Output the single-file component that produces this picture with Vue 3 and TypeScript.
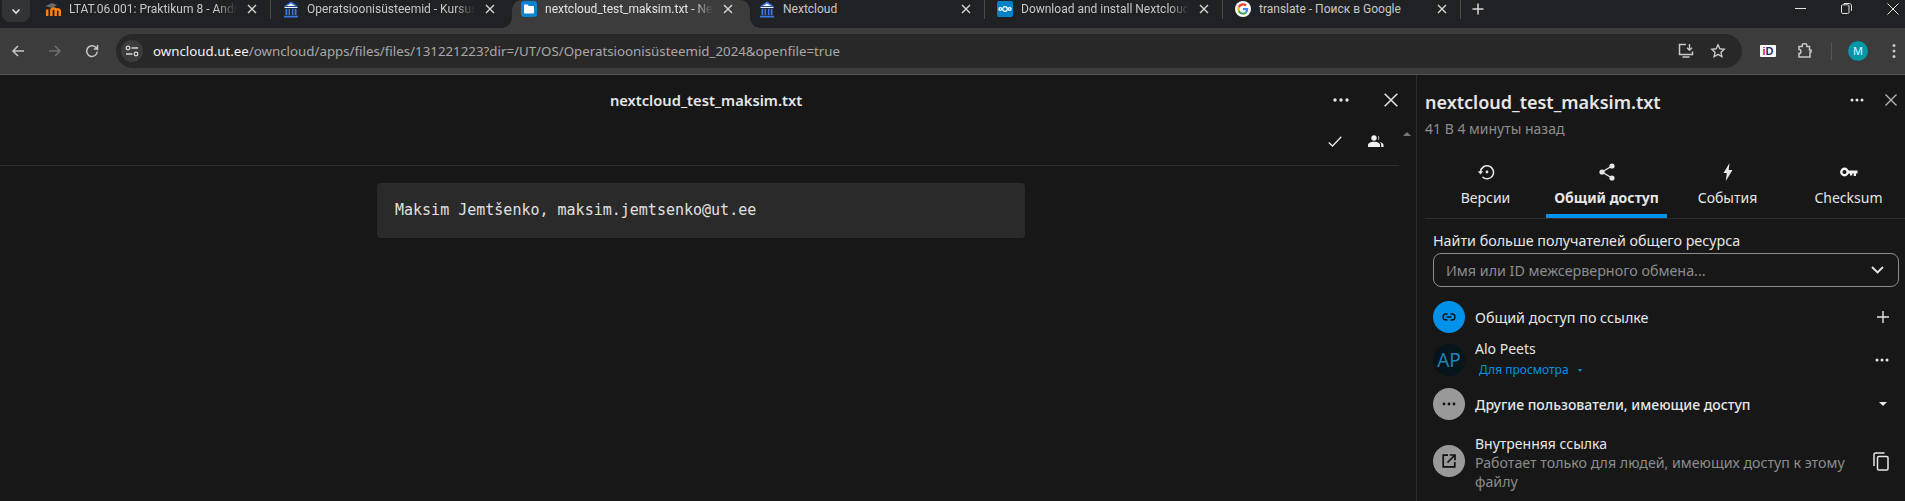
<template>
  <div class="page">
    <div class="tabstrip">
      <button class="tab-search">
        <svg width="12" height="12" viewBox="0 0 12 12"><path d="M2.5 4.5 6 8l3.5-3.5" fill="none" stroke="#e3e3e3" stroke-width="1.6" /></svg>
      </button>
      <div class="tabs">
        <div
          v-for="tab of tabs"
          :key="tab.title"
          class="tab"
          :class="{ 'tab--active': tab.active, 'tab--sep': tab.sep }"
        >
          <span class="favicon">
            <svg v-if="tab.icon === 'moodle'" width="16" height="16" viewBox="0 0 16 16">
              <path d="M.5 5 7 2l5 2-5 3z" fill="#6a6a6a" />
              <path d="M2.2 15V8.500M6.300 15V9.800a2.200 2.200 0 0 1 4.400 0V15M10.700 9.800a2.100 2.100 0 0 1 4.100 0V15" fill="none" stroke="#f98012" stroke-width="2.500" />
            </svg>
            <svg v-else-if="tab.icon === 'ut'" width="16" height="17" viewBox="0 0 16 17">
              <path d="M8 .5.800 5.500h14.400z" fill="#3b78e7" />
              <path d="M8 2.500 4 5h8z" fill="#fff" />
              <path d="M1.500 6h13v1H1.500z" fill="#e8eefc" />
              <path d="M2.500 7.800h1.800v6.200H2.500zM5.600 7.800h1.500v6.200H5.600zM8.900 7.800h1.500v6.200H8.900zM11.700 7.800h1.800v6.200h-1.800zM1 14.800h14V16.500H1z" fill="#3b78e7" />
            </svg>
            <svg v-else-if="tab.icon === 'folder'" width="16" height="16" viewBox="0 0 16 16">
              <rect width="16" height="16" rx="3" fill="#0a84d0" />
              <path d="M3 4.500c0-.5.400-.9.900-.9h2.600l1.300 1.300h4.300c.5 0 .9.400.9.900v5.700c0 .5-.4.900-.9.900H3.900a.9.900 0 0 1-.9-.9z" fill="#fff" />
            </svg>
            <svg v-else-if="tab.icon === 'nc'" width="16" height="16" viewBox="0 0 16 16">
              <rect width="16" height="16" rx="2" fill="#0082c9" />
              <g fill="none" stroke="#fff" stroke-width="1.300">
                <circle cx="8" cy="8" r="2.300" />
                <circle cx="3.300" cy="8" r="1.400" />
                <circle cx="12.700" cy="8" r="1.400" />
              </g>
            </svg>
            <svg v-else width="16" height="16" viewBox="0 0 48 48">
              <circle cx="24" cy="24" r="24" fill="#fff" />
              <g transform="translate(7 7) scale(.71)">
                <path fill="#EA4335" d="M24 9.500c3.500 0 6.700 1.200 9.200 3.600l6.900-6.900C35.900 2.400 30.500 0 24 0 14.600 0 6.500 5.400 2.600 13.200l8 6.200C12.400 13.700 17.700 9.500 24 9.500z" />
                <path fill="#4285F4" d="M46.100 24.500c0-1.600-.1-3.100-.4-4.500H24v9h12.400c-.5 2.900-2.200 5.400-4.700 7l7.600 5.900c4.400-4.100 6.800-10.100 6.800-17.400z" />
                <path fill="#FBBC05" d="M10.500 28.600c-.5-1.400-.8-3-.8-4.600s.3-3.200.8-4.600l-8-6.200C.9 16.500 0 20.100 0 24s.9 7.500 2.600 10.800z" />
                <path fill="#34A853" d="M24 48c6.500 0 11.900-2.100 15.900-5.800l-7.600-5.900c-2.100 1.400-4.900 2.300-8.300 2.300-6.300 0-11.600-4.200-13.500-9.900l-8 6.200C6.500 42.600 14.600 48 24 48z" />
              </g>
            </svg>
          </span>
          <span class="tab-title" :class="{ 'tab-title--fade': tab.fade }">{{ tab.title }}</span>
          <svg class="tab-close" width="10" height="10" viewBox="0 0 10 10"><path d="M1 1l8 8M9 1 1 9" stroke="#d6d6d6" stroke-width="1.400" /></svg>
        </div>
      </div>
      <svg class="new-tab" width="12" height="12" viewBox="0 0 12 12"><path d="M6 .5v11M.5 6h11" stroke="#d6d6d6" stroke-width="1.500" /></svg>
      <div class="win-controls">
        <svg width="11" height="11" viewBox="0 0 11 11"><path d="M0 5.500h11" stroke="#e3e3e3" /></svg>
        <svg width="11" height="11" viewBox="0 0 11 11"><path d="M.5 3c0-.8.500-1.200 1.200-1.200h5c.8 0 1.300.5 1.300 1.200v6.300c0 .7-.5 1.200-1.300 1.200h-5C1 10.500.5 10 .5 9.300zM2.800.5h5.400c1.300 0 2.300 1 2.300 2.300v5" fill="none" stroke="#e3e3e3" />
        </svg>
        <svg width="12" height="12" viewBox="0 0 12 12"><path d="M.5.500l11 11M11.500.500l-11 11" stroke="#e3e3e3" /></svg>
      </div>
    </div>

    <div class="toolbar">
      <div class="nav">
        <svg width="16" height="16" viewBox="0 0 16 16"><path d="M14 8H3M8 3 3 8l5 5" fill="none" stroke="#c7c7c7" stroke-width="1.500" /></svg>
        <svg width="16" height="16" viewBox="0 0 16 16"><path d="M2 8h11M8 3l5 5-5 5" fill="none" stroke="#6f6f6f" stroke-width="1.500" /></svg>
        <svg width="16" height="16" viewBox="0 0 16 16"><path d="M13.300 8.500a5.300 5.300 0 1 1-1.600-4.200L13.500 6V2M13.500 6H9.800" fill="none" stroke="#c7c7c7" stroke-width="1.500" /></svg>
      </div>
      <div class="omnibox">
        <span class="site-info">
          <svg width="14" height="14" viewBox="0 0 14 14">
            <g fill="none" stroke="#d6d6d6" stroke-width="1.300">
              <path d="M6.500 4H13M1 10h6.500" />
              <circle cx="3" cy="4" r="1.800" />
              <circle cx="11" cy="10" r="1.800" />
            </g>
          </svg>
        </span>
        <span class="url"><b>owncloud.ut.ee</b>/owncloud/apps/files/files/131221223?dir=/UT/OS/Operatsioonisüsteemid_2024&amp;openfile=true</span>
        <span class="omni-icons">
          <svg width="18" height="18" viewBox="0 0 18 18"><path d="M9 2.500H2.500v10h13V9.500M5.500 15h7" fill="none" stroke="#c7c7c7" stroke-width="1.500" /><path d="M12.500 2v6M10 5.800l2.500 2.500L15 5.800" fill="none" stroke="#c7c7c7" stroke-width="1.400" /></svg>
          <svg width="16" height="16" viewBox="0 0 16 16"><path d="m8 1.800 1.900 4 4.300.5-3.200 3 .9 4.300L8 11.400l-3.900 2.200.9-4.300-3.200-3 4.300-.5z" fill="none" stroke="#c7c7c7" stroke-width="1.400" /></svg>
        </span>
      </div>
      <div class="extensions">
        <span class="ext-id"><i>i</i>D</span>
        <svg class="ext-puzzle" width="18" height="18" viewBox="0 0 18 18"><path d="M3 4.500h3.200V3.200c0-.9.700-1.500 1.500-1.500h1.600c.8 0 1.500.6 1.500 1.500v1.300h2.700V8h1.500v2H14v5H3v-3.500c1.300 0 2-.8 2-1.800s-.7-2.200-2-2.200z" fill="none" stroke="#c7c7c7" stroke-width="1.500" /></svg>
        <span class="ext-sep"></span>
        <span class="profile">M</span>
        <svg width="4" height="16" viewBox="0 0 4 16"><g fill="#c7c7c7"><circle cx="2" cy="2.500" r="1.500" /><circle cx="2" cy="8" r="1.500" /><circle cx="2" cy="13.500" r="1.500" /></g></svg>
      </div>
    </div>

    <div class="content">
      <main class="viewer">
        <header class="viewer-head">
          <h1 class="viewer-title">nextcloud_test_maksim.txt</h1>
          <svg class="dots" width="16" height="4" viewBox="0 0 16 4"><g fill="#e6e6e6"><circle cx="2" cy="2" r="1.700" /><circle cx="8" cy="2" r="1.700" /><circle cx="14" cy="2" r="1.700" /></g></svg>
          <svg class="close" width="14" height="14" viewBox="0 0 14 14"><path d="M.7.700l12.600 12.600M13.300.700.700 13.300" stroke="#e6e6e6" stroke-width="1.500" /></svg>
        </header>
        <div class="menubar">
          <svg width="14" height="11" viewBox="0 0 14 11"><path d="M.7 6.500 4.500 10 13.300.8" fill="none" stroke="#e6e6e6" stroke-width="1.300" /></svg>
          <svg width="16" height="12" viewBox="0 0 16 12"><g fill="#f0f0f0"><circle cx="6" cy="3" r="2.700" /><path d="M0 12V10c0-2 2.500-3.300 6-3.300s6 1.300 6 3.300v2z" /><path d="M9.800.500a2.800 2.800 0 0 1 0 5c1-1.500 1-3.500 0-5zM12 7c2 .6 3.500 1.500 3.500 3v2h-2.300v-2c0-1.200-.5-2.200-1.200-3z" /></g></svg>
          <span class="scroll-caret"></span>
        </div>
        <div class="editor">
          <pre class="code">Maksim Jemtšenko, maksim.jemtsenko@ut.ee</pre>
        </div>
      </main>

      <aside class="sidebar">
        <div class="side-head">
          <div>
            <h2 class="side-title">nextcloud_test_maksim.txt</h2>
            <p class="side-sub">41 B 4 минуты назад</p>
          </div>
          <svg class="side-dots" width="14" height="4" viewBox="0 0 14 4"><g fill="#e6e6e6"><circle cx="2" cy="2" r="1.500" /><circle cx="7" cy="2" r="1.500" /><circle cx="12" cy="2" r="1.500" /></g></svg>
          <svg class="side-close" width="12" height="12" viewBox="0 0 12 12"><path d="M.5.500l11 11M11.500.500l-11 11" stroke="#b8b8b8" stroke-width="1.300" /></svg>
        </div>

        <nav class="side-tabs">
          <div class="side-tab">
            <svg width="18" height="16" viewBox="0 0 18 16"><path d="M3.500 8a6.500 6.500 0 1 1 2 5" fill="none" stroke="#e6e6e6" stroke-width="1.600" /><path d="M.8 7.300h5.400L3.500 10.500z" fill="#e6e6e6" /><circle cx="10" cy="8" r="1.400" fill="#e6e6e6" /></svg>
            <span>Версии</span>
          </div>
          <div class="side-tab side-tab--active">
            <svg width="16" height="18" viewBox="0 0 16 18"><g fill="#e6e6e6"><circle cx="13" cy="3" r="2.600" /><circle cx="3" cy="9" r="2.600" /><circle cx="13" cy="15" r="2.600" /></g><path d="M13 3 3 9l10 6" fill="none" stroke="#e6e6e6" stroke-width="1.400" /></svg>
            <span>Общий доступ</span>
          </div>
          <div class="side-tab">
            <svg width="10" height="18" viewBox="0 0 10 18"><path d="M6.500 0 .5 10h3.300L2.800 18l6.700-11H5.700z" fill="#e6e6e6" /></svg>
            <span>События</span>
          </div>
          <div class="side-tab">
            <svg width="18" height="10" viewBox="0 0 18 10"><circle cx="4.500" cy="5" r="3.200" fill="none" stroke="#f0f0f0" stroke-width="2.400" /><path d="M8 3.500h9.500v3H16V9h-2.300V6.500h-1.500V8.500H10V6.500H8z" fill="#f0f0f0" /></svg>
            <span>Checksum</span>
          </div>
        </nav>

        <section class="sharing">
          <label class="search-label">Найти больше получателей общего ресурса</label>
          <div class="search-box">
            <span>Имя или ID межсерверного обмена...</span>
            <svg width="13" height="8" viewBox="0 0 13 8"><path d="M1 1l5.500 5.500L12 1" fill="none" stroke="#e6e6e6" stroke-width="1.800" /></svg>
          </div>

          <div class="row row--link">
            <span class="badge badge--blue">
              <svg width="14" height="8" viewBox="0 0 14 8"><path d="M5.500 1H4a3 3 0 0 0 0 6h1.500M8.500 1H10a3 3 0 0 1 0 6H8.500M4.500 4h5" fill="none" stroke="#111" stroke-width="1.400" /></svg>
            </span>
            <span class="row-text">Общий доступ по ссылке</span>
            <svg class="row-end" width="12" height="12" viewBox="0 0 12 12"><path d="M6 0v12M0 6h12" stroke="#e6e6e6" stroke-width="1.400" /></svg>
          </div>

          <div class="row row--user">
            <span class="badge badge--user">AP</span>
            <div class="user-text">
              <div class="user-name">Alo Peets</div>
              <div class="user-perm">Для просмотра <i class="perm-caret"></i></div>
            </div>
            <svg class="row-end" width="14" height="4" viewBox="0 0 14 4"><g fill="#e6e6e6"><circle cx="2" cy="2" r="1.500" /><circle cx="7" cy="2" r="1.500" /><circle cx="12" cy="2" r="1.500" /></g></svg>
          </div>

          <div class="row row--others">
            <span class="badge badge--grey">
              <svg width="14" height="4" viewBox="0 0 14 4"><g fill="#111"><circle cx="2" cy="2" r="1.400" /><circle cx="7" cy="2" r="1.400" /><circle cx="12" cy="2" r="1.400" /></g></svg>
            </span>
            <span class="row-text row-text--strong">Другие пользователи, имеющие доступ</span>
            <i class="row-end others-caret"></i>
          </div>

          <div class="row row--internal">
            <span class="badge badge--grey">
              <svg width="14" height="14" viewBox="0 0 14 14"><path d="M6 1.200H1.200v11.600h11.600V8M7.800 1h5.200v5.200M13 1 5.500 8.500" fill="none" stroke="#111" stroke-width="1.700" /></svg>
            </span>
            <div class="internal-text">
              <div class="internal-title">Внутренняя ссылка</div>
              <div class="internal-sub">Работает только для людей, имеющих доступ к этому файлу</div>
            </div>
            <svg class="row-end" width="16" height="19" viewBox="0 0 16 19"><path d="M11.500 1H2.500C1.700 1 1 1.700 1 2.500V14" fill="none" stroke="#e6e6e6" stroke-width="1.500" /><rect x="4.500" y="4.500" width="10.500" height="13.500" rx="1.300" fill="none" stroke="#e6e6e6" stroke-width="1.500" /></svg>
          </div>
        </section>
      </aside>
    </div>
  </div>
</template>

<script setup lang="ts">
interface BrowserTab {
  title: string
  icon: string
  active?: boolean
  sep?: boolean
  fade?: boolean
}

// titles are cut where the tab strip cuts them
const tabs: BrowserTab[] = [
  { title: 'LTAT.06.001: Praktikum 8 - Andr', icon: 'moodle', sep: true, fade: true },
  { title: 'Operatsioonisüsteemid - Kursus', icon: 'ut', fade: true },
  { title: 'nextcloud_test_maksim.txt - Nex', icon: 'folder', active: true, fade: true },
  { title: 'Nextcloud', icon: 'ut', sep: true },
  { title: 'Download and install Nextcloud', icon: 'nc', sep: true, fade: true },
  { title: 'translate - Поиск в Google', icon: 'g', sep: true },
]
</script>

<style>
html,
body {
  margin: 0;
  background: #171717;
}
</style>

<style scoped>
.page {
  width: 1905px;
  height: 501px;
  overflow: hidden;
  display: flex;
  flex-direction: column;
  background: #171717;
  color: #e6e6e6;
  font-family: 'Noto Sans', 'Open Sans', sans-serif;
}

.tabstrip {
  height: 28px;
  flex: none;
  display: flex;
  background: #202124;
  position: relative;
}

.tab-search {
  width: 28px;
  height: 22px;
  margin-left: 2px;
  padding: 0;
  border: 0;
  border-radius: 0 0 8px 8px;
  background: #323436;
  display: flex;
  align-items: center;
  justify-content: center;
}

.tabs {
  display: flex;
  margin-left: 6px;
}

.tab {
  width: 238px;
  height: 28px;
  box-sizing: border-box;
  padding: 0 17px 10px 9px;
  display: flex;
  align-items: center;
  font-family: Roboto, 'Noto Sans', sans-serif;
  font-size: 12px;
  color: #c7c7c7;
  position: relative;
}

.tab--active {
  background: #3c3c3c;
  border-radius: 10px 10px 0 0;
  color: #e3e3e3;
}

/* flared bottom corners of the active tab */
.tab--active::before,
.tab--active::after {
  content: '';
  position: absolute;
  bottom: 0;
  width: 10px;
  height: 10px;
}

.tab--active::before {
  left: -10px;
  background: radial-gradient(circle at 0 0, transparent 9.5px, #3c3c3c 10px);
}

.tab--active::after {
  right: -10px;
  background: radial-gradient(circle at 100% 0, transparent 9.5px, #3c3c3c 10px);
}

.tab--sep::after {
  content: '';
  position: absolute;
  right: 3px;
  top: 0;
  width: 1px;
  height: 19px;
  background: #4a4a4a;
}

.favicon {
  width: 16px;
  height: 16px;
  flex: none;
  display: flex;
  align-items: center;
  justify-content: center;
}

.tab-title {
  margin-left: 8px;
  flex: 1;
  min-width: 0;
  white-space: nowrap;
}

.tab-title--fade {
  -webkit-mask-image: linear-gradient(90deg, #000 88%, transparent);
  mask-image: linear-gradient(90deg, #000 88%, transparent);
}

.tab-close {
  margin-left: 10px;
  flex: none;
}

.new-tab {
  margin: 3px 0 0 8px;
}

.win-controls {
  margin-left: auto;
  padding: 3px 6px 0 0;
  display: flex;
  gap: 35px;
  align-items: flex-start;
}

.toolbar {
  height: 47px;
  flex: none;
  box-sizing: border-box;
  padding: 6px 0;
  display: flex;
  align-items: flex-start;
  background: #3c3c3c;
  border-bottom: 1px solid #555;
}

.nav {
  width: 116px;
  height: 34px;
  flex: none;
  box-sizing: border-box;
  padding-left: 10px;
  display: flex;
  align-items: center;
  gap: 21px;
}

.omnibox {
  width: 1626px;
  height: 34px;
  flex: none;
  box-sizing: border-box;
  padding: 0 16px 0 5px;
  display: flex;
  align-items: center;
  border-radius: 17px;
  background: #282828;
}

.site-info {
  width: 22px;
  height: 22px;
  flex: none;
  border-radius: 50%;
  background: #3c3c3c;
  display: flex;
  align-items: center;
  justify-content: center;
}

.url {
  margin-left: 10px;
  font-size: 13.3px;
  color: #a8a8a8;
  white-space: nowrap;
}

.url b {
  font-weight: 400;
  color: #f0f0f0;
}

.omni-icons {
  margin-left: auto;
  display: flex;
  align-items: center;
  gap: 15px;
}

.extensions {
  flex: 1;
  height: 34px;
  box-sizing: border-box;
  padding-left: 18px;
  display: flex;
  align-items: center;
}

.ext-id {
  width: 16px;
  height: 12px;
  flex: none;
  background: #fff;
  border-radius: 1px;
  font: 700 11px/12px 'Liberation Sans', sans-serif;
  color: #14306e;
  text-align: center;
}

.ext-id i {
  font-style: normal;
  color: #d8232a;
}

.ext-puzzle {
  margin-left: 20px;
}

.ext-sep {
  width: 1px;
  height: 18px;
  margin-left: 17px;
  background: #555;
}

.profile {
  width: 20px;
  height: 20px;
  flex: none;
  margin: 0 24px 0 16px;
  border-radius: 50%;
  background: #0097a7;
  color: #e8f6f8;
  font-size: 11px;
  line-height: 20px;
  text-align: center;
}

.content {
  flex: 1;
  min-height: 0;
  display: flex;
}

.viewer {
  width: 1417px;
  flex: none;
  box-sizing: border-box;
  border-right: 1px solid #2c2c2c;
}

.viewer-head {
  height: 50px;
  box-sizing: border-box;
  padding-right: 18px;
  display: flex;
  align-items: center;
  position: relative;
}

.viewer-title {
  position: absolute;
  left: 0;
  width: 1412px;
  margin: 0;
  text-align: center;
  font-size: 14.7px;
  font-weight: 600;
  color: #e6e6e6;
}

.dots {
  margin-left: auto;
}

.close {
  margin-left: 35px;
}

.menubar {
  height: 41px;
  width: 1399px;
  box-sizing: border-box;
  padding: 0 15px 8px 0;
  display: flex;
  align-items: center;
  justify-content: flex-end;
  gap: 26px;
  border-bottom: 1px solid #2c2c2c;
  position: relative;
}

.scroll-caret {
  position: absolute;
  right: -12px;
  top: 7px;
  border: 4px solid transparent;
  border-top: 0;
  border-bottom: 4px solid #777;
}

.editor {
  padding: 17px 0 0 377px;
}

.code {
  width: 648px;
  height: 55px;
  box-sizing: border-box;
  margin: 0;
  padding: 0 18px;
  background: #2a2a2a;
  border-radius: 4px;
  font: 15px/55px 'DejaVu Sans Mono', 'Liberation Mono', monospace;
  color: #e0e0e0;
}

.sidebar {
  flex: 1;
  min-width: 0;
  overflow: hidden;
  box-sizing: border-box;
  padding-left: 8px;
}

.side-head {
  height: 75px;
  display: flex;
  align-items: flex-start;
}

.side-title {
  margin: 14px 0 0;
  font-size: 18px;
  line-height: 26px;
  font-weight: 600;
  color: #e6e6e6;
}

.side-sub {
  margin: 4px 0 0;
  font-size: 14px;
  line-height: 20px;
  color: #8c8c8c;
}

.side-dots {
  margin: 23px 0 0 auto;
}

.side-close {
  margin: 19px 8px 0 21px;
}

.side-tabs {
  width: 484px;
  height: 68px;
  display: flex;
  border-bottom: 1px solid #2c2c2c;
}

.side-tab {
  width: 121px;
  height: 68px;
  box-sizing: border-box;
  padding-top: 13px;
  display: flex;
  flex-direction: column;
  align-items: center;
  font-size: 14px;
  color: #e6e6e6;
}

.side-tab svg {
  height: 18px;
}

.side-tab span {
  margin-top: 7px;
  line-height: 20px;
}

.side-tab--active {
  font-weight: 700;
  border-bottom: 4px solid #0091ea;
}

.sharing {
  padding-left: 8px;
}

.search-label {
  display: block;
  margin-top: 12px;
  font-size: 14.3px;
  line-height: 20px;
  color: #e6e6e6;
}

.search-box {
  width: 466px;
  height: 34px;
  box-sizing: border-box;
  margin-top: 2px;
  padding: 0 14px 0 12px;
  display: flex;
  align-items: center;
  justify-content: space-between;
  border: 1px solid #8c8c8c;
  border-radius: 8px;
  font-size: 14.3px;
  color: #8c8c8c;
}

.row {
  width: 466px;
  display: flex;
  align-items: center;
  position: relative;
}

.row-end {
  position: absolute;
  right: 10px;
}

.badge {
  width: 32px;
  height: 32px;
  flex: none;
  border-radius: 50%;
  display: flex;
  align-items: center;
  justify-content: center;
}

.badge--blue {
  background: #0091ea;
}

.badge--grey {
  background: #999;
}

.badge--user {
  background: #06141c;
  color: #1b86b4;
  font-size: 19px;
}

.row-text {
  margin-left: 10px;
  font-size: 14.3px;
  color: #e6e6e6;
}

.row-text--strong {
  font-size: 14px;
  font-weight: 500;
}

.row--link {
  height: 32px;
  margin-top: 14px;
}

.row--user {
  height: 44px;
  margin-top: 5px;
}

.user-text {
  margin-left: 10px;
  padding-bottom: 3px;
}

.user-name {
  font-size: 14px;
  line-height: 20px;
  color: #e6e6e6;
}

.user-perm {
  margin: 3px 0 0 4px;
  font-size: 12px;
  line-height: 16px;
  color: #0091ea;
}

.perm-caret {
  display: inline-block;
  margin-left: 6px;
  vertical-align: 2px;
  border: 2.5px solid transparent;
  border-bottom: 0;
  border-top: 3px solid #0091ea;
}

.row--others {
  height: 32px;
  margin-top: 6px;
}

.others-caret {
  border: 4px solid transparent;
  border-bottom: 0;
  border-top: 4px solid #e6e6e6;
  right: 12px;
}

.row--internal {
  margin-top: 15px;
}

.row--internal .badge,
.row--internal .row-end {
  margin-bottom: 4px;
}

.internal-text {
  margin-left: 10px;
  width: 385px;
}

.internal-title {
  font-size: 14px;
  line-height: 18px;
  color: #e6e6e6;
}

.internal-sub {
  font-size: 14.2px;
  line-height: 19px;
  color: #8c8c8c;
}
</style>
